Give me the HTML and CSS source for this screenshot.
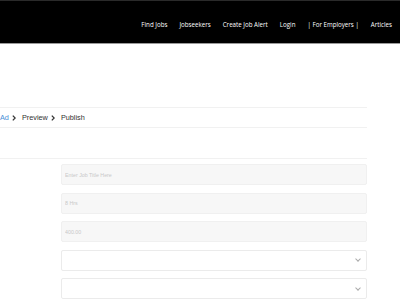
FILE: index.html
```html
<!DOCTYPE html>
<html lang="en">
<head>
  <meta charset="UTF-8">
  <title>Post a Job</title>
  <link rel="stylesheet" href="styles.css">
</head>
<body>
  <!-- Header -->
  <div class="header">
    <ul class="nav">
      <li>Find Jobs</li>
      <li>Jobseekers</li>
      <li>Create Job Alert</li>
      <li>Login</li>
      <li>| For Employers |</li>
      <li>Articles</li>
    </ul>
  </div>

  <!-- Main Content -->
  <div class="container">
    <div class="steps">
      <span class="active">Ad</span>
      <svg class="chev" viewBox="0 0 4 6"><path d="M0.8 0.6 L3.2 3 L0.8 5.4" fill="none" stroke="#333" stroke-width="1.3"/></svg>
      <span>Preview</span>
      <svg class="chev" viewBox="0 0 4 6"><path d="M0.8 0.6 L3.2 3 L0.8 5.4" fill="none" stroke="#333" stroke-width="1.3"/></svg>
      <span>Publish</span>
    </div>
    <div class="section"></div>

    <form class="job-form">
      <input type="text" placeholder="Enter Job Title Here">
      <input type="text" placeholder="8 Hrs">
      <input type="text" placeholder="400.00">
      <div class="select"><span class="arrow"></span></div>
      <div class="select"><span class="arrow"></span></div>
    </form>
  </div>
</body>
</html>
```

FILE: styles.css
```css
body {
  margin: 0;
  padding: 0;
  background-color: #fff;
  font-family: 'Open Sans', sans-serif;
  color: #333;
  overflow: hidden;
}

/* Header Styles */
.header {
  background-color: #000;
  border-top: 1px solid #2a2a2a;
  border-bottom: 1px solid #9a9a9a;
  height: 42px;
  display: flex;
  justify-content: flex-end;
  align-items: center;
}

.header .nav {
  list-style: none;
  margin: 0;
  padding: 4px 8px 0 0;
  display: flex;
  gap: 12px;
}

.header .nav li {
  color: #fff;
  font-size: 6.2px;
  white-space: nowrap;
}

/* Container Styles */
.container {
  width: 367px;
  padding-top: 63px;
}

.steps {
  border-top: 1px solid #f1f1f1;
  border-bottom: 1px solid #f1f1f1;
  height: 19px;
  display: flex;
  align-items: center;
  gap: 3px;
  font-family: 'Liberation Sans', sans-serif;
  font-size: 7.3px;
  color: #333;
}

.steps .active {
  color: #4a8fd6;
}

.steps .chev {
  width: 4px;
  height: 6px;
  margin: 0 3px 0 0;
}

.section {
  height: 30px;
  border-bottom: 1px solid #f1f1f1;
}

/* Form */
.job-form {
  margin: 5px 0 0 61px;
  display: flex;
  flex-direction: column;
  gap: 7.5px;
}

.job-form input,
.job-form .select {
  box-sizing: border-box;
  height: 21px;
  width: 306px;
  border: 1px solid #f0f0f0;
  border-radius: 2px;
  background-color: #f7f7f7;
  font-family: 'Liberation Sans', sans-serif;
  font-size: 5.3px;
  padding: 0 3px;
  outline: none;
}

.job-form input::placeholder {
  color: #c8c8c8;
}

.job-form .select {
  background-color: #fff;
  border-color: #ebebeb;
  display: flex;
  justify-content: flex-end;
  align-items: center;
  padding-right: 6px;
}

.job-form .arrow {
  width: 3px;
  height: 3px;
  border-right: 1px solid #aaa;
  border-bottom: 1px solid #aaa;
  transform: rotate(45deg);
  margin-top: -2px;
}
```
